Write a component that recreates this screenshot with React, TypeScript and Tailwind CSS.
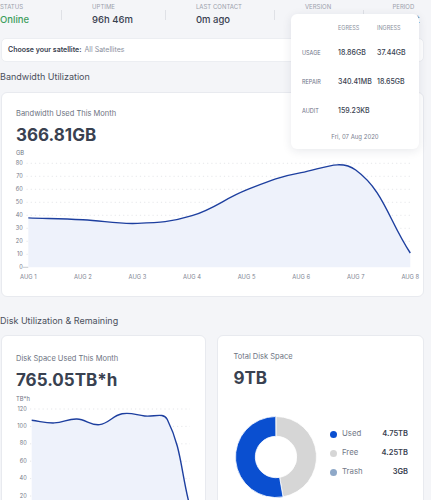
import React from 'react';

type Pt = [number, number];

// chart.js-like spline (tension 0.4)
function splinePath(pts: Pt[], t = 0.4): string {
  const cps = pts.map((p, i) => {
    const prev = pts[i - 1] ?? p;
    const next = pts[i + 1] ?? p;
    const d01 = Math.hypot(p[0] - prev[0], p[1] - prev[1]);
    const d12 = Math.hypot(next[0] - p[0], next[1] - p[1]);
    const sum = d01 + d12 || 1;
    const fa = (t * d01) / sum;
    const fb = (t * d12) / sum;
    return {
      prev: [p[0] - fa * (next[0] - prev[0]), p[1] - fa * (next[1] - prev[1])] as Pt,
      next: [p[0] + fb * (next[0] - prev[0]), p[1] + fb * (next[1] - prev[1])] as Pt,
    };
  });
  let d = `M${pts[0][0]},${pts[0][1]}`;
  for (let i = 1; i < pts.length; i++) {
    const a = cps[i - 1].next;
    const b = cps[i].prev;
    d += ` C${a[0]},${a[1]} ${b[0]},${b[1]} ${pts[i][0]},${pts[i][1]}`;
  }
  return d;
}

const bwVals = [38, 36.6, 33.8, 39.7, 59.5, 72.8, 74.8, 11];
const bwX = (i: number) => 28.3 + i * 54.57;
const bwY = (v: number) => 267.3 - 1.3 * v;

const diskVals = [107, 104, 108.5, 102, 114.5, 112, 108, 8];
const dkX = (i: number) => 31.7 + i * 22.6;
const dkY = (v: number) => 513.4 - 0.87 * v;

function BandwidthChart() {
  const pts: Pt[] = bwVals.map((v, i) => [bwX(i), bwY(v)]);
  const line = splinePath(pts);
  const area = `${line} L${bwX(7)},${bwY(0)} L${bwX(0)},${bwY(0)} Z`;
  return (
    <svg width="393" height="128" className="overflow-visible block">
      <g transform="translate(-16,-157)">
        {[10, 20, 30, 40, 50, 60, 70, 80].map((v) => (
          <line key={v} x1={26.5} x2={410} y1={bwY(v)} y2={bwY(v)} stroke="#dfe1e5" strokeWidth="0.8" strokeDasharray="1.2 3" />
        ))}
        {[0, 10, 20, 30, 40, 50, 60, 70, 80].map((v) => (
          <text key={v} x={22.8} y={bwY(v)} textAnchor="end" dominantBaseline="middle" fontSize="5.6" fill="#747a87">
            {v}
          </text>
        ))}
        <line x1={23} x2={28.3} y1={bwY(0)} y2={bwY(0)} stroke="#b9bcc3" strokeWidth="0.8" />
        <path d={area} fill="#eef2fb" />
        <path d={line} fill="none" stroke="#1d3f9f" strokeWidth="1.4" />
        {['AUG 1', 'AUG 2', 'AUG 3', 'AUG 4', 'AUG 5', 'AUG 6', 'AUG 7', 'AUG 8'].map((l, i) => (
          <text key={l} x={bwX(i)} y={277} textAnchor="middle" dominantBaseline="middle" fontSize="5.8" fill="#7d8392">
            {l}
          </text>
        ))}
      </g>
    </svg>
  );
}

function DiskChart() {
  const pts: Pt[] = diskVals.map((v, i) => [dkX(i), dkY(v)]);
  const line = splinePath(pts);
  const area = `${line} L${dkX(7)},${dkY(0)} L${dkX(0)},${dkY(0)} Z`;
  return (
    <svg width="176" height="100" className="overflow-visible block">
      <g transform="translate(-16,-403)">
        {[20, 40, 60, 80, 100, 120].map((v) => (
          <line key={v} x1={30} x2={190} y1={dkY(v)} y2={dkY(v)} stroke="#dfe1e5" strokeWidth="0.8" strokeDasharray="1.2 3" />
        ))}
        {[20, 40, 60, 80, 100, 120].map((v) => (
          <text key={v} x={26.7} y={dkY(v)} textAnchor="end" dominantBaseline="middle" fontSize="5.6" fill="#747a87">
            {v}
          </text>
        ))}
        <path d={area} fill="#eef2fb" />
        <path d={line} fill="none" stroke="#1d3f9f" strokeWidth="1.4" />
      </g>
    </svg>
  );
}

function arc(cx: number, cy: number, r0: number, r1: number, a0: number, a1: number) {
  const p = (r: number, a: number) => {
    const rad = ((a - 90) * Math.PI) / 180;
    return [cx + r * Math.cos(rad), cy + r * Math.sin(rad)];
  };
  const large = a1 - a0 > 180 ? 1 : 0;
  const [x1, y1] = p(r1, a0);
  const [x2, y2] = p(r1, a1);
  const [x3, y3] = p(r0, a1);
  const [x4, y4] = p(r0, a0);
  return `M${x1},${y1} A${r1},${r1} 0 ${large} 1 ${x2},${y2} L${x3},${y3} A${r0},${r0} 0 ${large} 0 ${x4},${y4} Z`;
}

function Donut() {
  return (
    <svg width="82" height="82" className="block shrink-0">
      <path d={arc(41, 41, 20.7, 40.5, 0, 170)} fill="#d6d6d6" stroke="#fff" strokeWidth="0.8" />
      <path d={arc(41, 41, 20.7, 40.5, 170, 359.6)} fill="#0a4fd0" stroke="#fff" strokeWidth="0.8" />
      <path d={arc(41, 41, 20.7, 40.5, 359.6, 360)} fill="#8ea8c8" />
    </svg>
  );
}

const header = [
  { label: 'STATUS', value: 'Online', green: true },
  { label: 'UPTIME', value: '96h 46m' },
  { label: 'LAST CONTACT', value: '0m ago' },
  { label: 'VERSION', value: '' },
];

const legend = [
  { name: 'Used', value: '4.75TB', color: 'bg-[#0a4fd0]' },
  { name: 'Free', value: '4.25TB', color: 'bg-[#d6d6d6]' },
  { name: 'Trash', value: '3GB', color: 'bg-[#8ea8c8]' },
];

export default function App() {
  return (
    <div className="relative w-[431px] h-[500px] overflow-hidden bg-[#f4f5f8] font-[family-name:Inter,sans-serif] text-[#394150]">
      {/* node stats */}
      <div className="flex items-center pt-[3px]">
        {header.map((h) => (
          <React.Fragment key={h.label}>
            <div className="pr-8">
              <div className="text-[6px] leading-[8px] text-[#9ba1ac]">{h.label}</div>
              <div className={`mt-[3px] text-[9.5px] leading-[12px] font-medium h-[12px] ${h.green ? 'text-[#3d9d5c]' : 'text-[#394150]'}`}>
                {h.value}
              </div>
            </div>
            <div className="w-px h-[10px] bg-[#dfe1e6] mr-[30px]" />
          </React.Fragment>
        ))}
        <div className="-ml-[7px] text-center">
          <div className="text-[6px] leading-[8px] text-[#9ba1ac]">PERIOD</div>
          <div className="mt-[3px] text-[9.5px] leading-[12px] font-medium">August</div>
        </div>
      </div>

      <div className="ml-px w-[423px]">
        {/* satellite selector */}
        <div className="mt-[12px] h-[24px] flex items-center px-[6px] bg-white rounded-[5px] border border-[#eceef2] text-[7px]">
          <span className="font-semibold text-[#394150]">Choose your satellite:</span>
          <span className="ml-[3px] text-[#8a909e]">All Satellites</span>
        </div>

        <h2 className="mt-[9px] -ml-px text-[9px] leading-[12px] text-[#4b505c]">Bandwidth Utilization</h2>

        <div className="mt-[9px] bg-white border border-[#e8eaef] rounded-[6px] pl-[14px] pt-[16px] pb-[11px]">
          <div className="text-[7.5px] leading-[10px] text-[#6d7382]">Bandwidth Used This Month</div>
          <div className="mt-[5px] text-[17px] leading-[22px] font-bold text-[#394150]">366.81GB</div>
          <div className="mt-[3px] text-[5.8px] leading-[8px] text-[#6d7382]">GB</div>
          <BandwidthChart />
        </div>

        <h2 className="mt-[18px] -ml-px text-[9px] leading-[12px] text-[#4b505c]">Disk Utilization &amp; Remaining</h2>

        <div className="mt-[8px] flex gap-[11px]">
          <div className="w-[206px] h-[200px] bg-white border border-[#e8eaef] rounded-[6px] pl-[14px] pt-[18px]">
            <div className="text-[7.5px] leading-[10px] text-[#6d7382]">Disk Space Used This Month</div>
            <div className="mt-[5px] text-[17px] leading-[22px] font-bold text-[#394150]">765.05TB*h</div>
            <div className="mt-[4px] text-[5.8px] leading-[8px] text-[#6d7382]">TB*h</div>
            <DiskChart />
          </div>

          <div className="w-[207px] h-[200px] bg-white border border-[#e8eaef] rounded-[6px] pl-[15px] pr-[15px] pt-[16px]">
            <div className="text-[7.5px] leading-[10px] text-[#6d7382]">Total Disk Space</div>
            <div className="mt-[5px] text-[17px] leading-[22px] font-bold text-[#394150]">9TB</div>
            <div className="mt-[27px] flex items-center">
              <div className="ml-[1.5px]">
                <Donut />
              </div>
              <div className="ml-[13px] flex-1 flex flex-col gap-[9px] -mt-[8px]">
                {legend.map((l) => (
                  <div key={l.name} className="flex items-center h-[10px]">
                    <span className={`w-[7px] h-[7px] rounded-full ${l.color}`} />
                    <span className="ml-[5px] text-[7.8px] text-[#737988]">{l.name}</span>
                    <span className="ml-auto text-[7.5px] font-semibold text-[#394150]">{l.value}</span>
                  </div>
                ))}
              </div>
            </div>
          </div>
        </div>
      </div>

      {/* tooltip over the bandwidth chart */}
      <div className="absolute left-[291px] top-[14px] w-[128px] h-[135px] bg-white rounded-[6px] shadow-[0_2px_10px_rgba(30,40,70,0.10)] pl-[11px] pt-[10px]">
        <div className="grid grid-cols-[36px_39px_auto] h-[8px] items-center text-[5.5px] leading-[8px] text-[#8a8f9c]">
          <span />
          <span>EGRESS</span>
          <span>INGRESS</span>
        </div>
        {[
          ['USAGE', '18.86GB', '37.44GB', 'mt-[16px]'],
          ['REPAIR', '340.41MB', '18.65GB', 'mt-[19px]'],
          ['AUDIT', '159.23KB', '', 'mt-[19px]'],
        ].map(([k, e, i, m]) => (
          <div key={k} className={`grid grid-cols-[36px_39px_auto] items-center h-[10px] ${m}`}>
            <span className="text-[5.5px] text-[#6b7186]">{k}</span>
            <span className="text-[7px] font-medium text-[#394150]">{e}</span>
            <span className="text-[7px] font-medium text-[#394150]">{i}</span>
          </div>
        ))}
        <div className="mt-[17px] -ml-[11px] text-center text-[6px] leading-[8px] text-[#7b8090]">Fri, 07 Aug 2020</div>
      </div>
    </div>
  );
}
